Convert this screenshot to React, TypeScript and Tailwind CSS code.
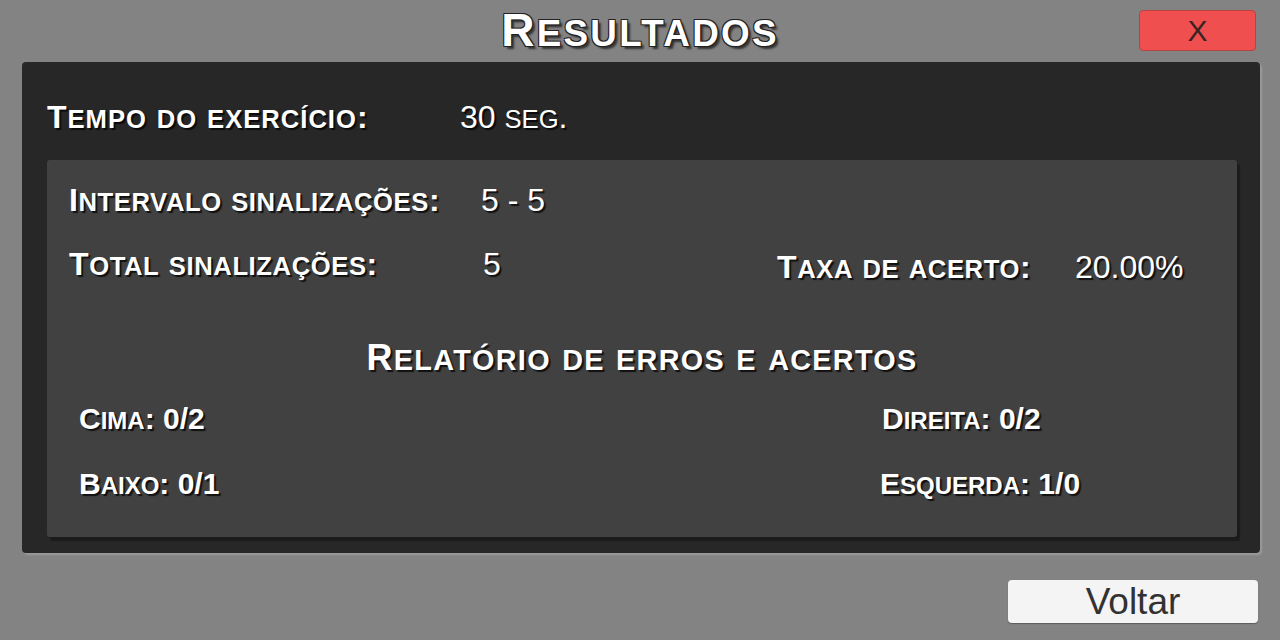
import React from "react";

const font = { fontFamily: '"Liberation Sans", Arial, sans-serif' };

// Unity-style small caps: capitals at full size, lowercase shown as 80% capitals
const SmallCaps = ({ text, size }: { text: string; size: number }) => {
  const runs: { small: boolean; s: string }[] = [];
  for (const ch of text) {
    const small = ch !== ch.toUpperCase();
    const last = runs[runs.length - 1];
    if (last && last.small === small) last.s += ch;
    else runs.push({ small, s: ch });
  }
  return (
    <>
      {runs.map((r, i) =>
        r.small ? (
          <span key={i} style={{ fontSize: size * 0.8 }}>
            {r.s.toUpperCase()}
          </span>
        ) : (
          <span key={i}>{r.s}</span>
        )
      )}
    </>
  );
};

const shadow = "[text-shadow:2px_2px_1px_rgba(0,0,0,0.75)]";

const Row = ({ label, value, labelW, wide }: { label: string; value: string; labelW: string; wide?: boolean }) => (
  <div className={`flex items-baseline text-[32px] text-white whitespace-nowrap ${shadow}`}>
    <span className={`${labelW} font-bold ${wide ? "tracking-[1px]" : "tracking-[0.6px]"}`}>
      <SmallCaps text={label} size={32} />
    </span>
    <span>
      <SmallCaps text={value} size={32} />
    </span>
  </div>
);

const Count = ({ text }: { text: string }) => (
  <div className={`h-[40px] flex items-center text-[30px] font-bold text-white whitespace-nowrap ${shadow}`}>
    <div>
      <SmallCaps text={text} size={30} />
    </div>
  </div>
);

export default function App() {
  return (
    <div style={font} className="w-[1280px] h-[640px] bg-[#838383] flex flex-col overflow-hidden">
      <div className="grid grid-cols-[1fr_auto_1fr] items-center h-[62px]">
        <div />
        <h1 className="text-[46px] font-bold text-white leading-none tracking-[2.3px] pb-[2px] [text-shadow:-1px_-1px_0_#222,1px_-1px_0_#222,-1px_1px_0_#222,1px_1px_0_#222,3px_3px_2px_rgba(0,0,0,0.6)]">
          <SmallCaps text="Resultados" size={46} />
        </h1>
        <div className="flex justify-end items-start h-full pt-[10px] pr-[24px]">
          <button className="w-[117px] h-[41px] rounded-[4px] bg-[#f04f4f] border border-[#b94242] text-[#3a2323] text-[30px] leading-none">
            X
          </button>
        </div>
      </div>

      <div className="ml-[22px] mr-[20px] h-[491px] rounded-[4px] bg-[#272727] shadow-[2px_2px_2px_rgba(170,170,170,0.6)] flex flex-col pl-[25px] pr-[23px] pb-[16px]">
        <div className="h-[98px] flex items-center pt-[12px]">
          <Row label="Tempo do exercício:" value="30 seg." labelW="w-[413px]" wide />
        </div>
        <div className="flex-1 rounded-[3px] bg-[#414141] shadow-[3px_4px_1px_#1b1b1b] flex flex-col pl-[22px] pr-[22px] pt-[16px]">
          <div className="h-[48px] flex items-center">
            <Row label="Intervalo sinalizações:" value="5 - 5" labelW="w-[412px]" />
          </div>
          <div className="h-[48px] flex items-center mt-[16px]">
            <div className="w-[708px]">
              <Row label="Total sinalizações:" value="5" labelW="w-[414px]" />
            </div>
            <div className="pt-[6px]">
              <Row label="Taxa de acerto:" value="20.00%" labelW="w-[298px]" />
            </div>
          </div>
          <div className={`h-[48px] mt-[46px] flex items-center justify-center text-[36px] font-bold text-white tracking-[1.3px] whitespace-nowrap ${shadow}`}>
            <div>
              <SmallCaps text="Relatório de erros e acertos" size={36} />
            </div>
          </div>
          <div className="flex pl-[10px] mt-[16px]">
            <div className="w-[801px] flex flex-col gap-[25px]">
              <Count text="Cima: 0/2" />
              <Count text="Baixo: 0/1" />
            </div>
            <div className="flex flex-col gap-[25px]">
              <div className="pl-[2px]">
                <Count text="Direita: 0/2" />
              </div>
              <Count text="Esquerda: 1/0" />
            </div>
          </div>
        </div>
      </div>

      <div className="flex justify-end pr-[22px] pt-[27px]">
        <button className="w-[250px] h-[43px] rounded-[4px] bg-[#f4f4f4] shadow-[0_1px_1px_rgba(0,0,0,0.3)] text-[#323232] text-[37px] leading-none">
          Voltar
        </button>
      </div>
    </div>
  );
}
